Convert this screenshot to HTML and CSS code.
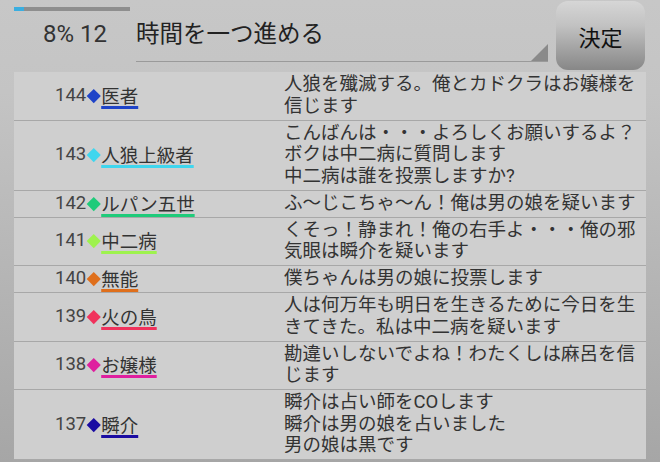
FILE: index.html
```html
<!DOCTYPE html>
<html lang="ja">
<head>
  <meta charset="UTF-8" />
  <title>人狼ログ</title>
  <link rel="stylesheet" href="styles.css">
</head>
<body>
  <header class="topbar">
    <div class="status">
      <div class="progress"><div class="progress-fill"></div></div>
      <div class="status-text">8% 12</div>
    </div>
    <div class="spinner">時間を一つ進める</div>
    <button class="submit">決定</button>
  </header>

  <div class="log">
    <div class="row">
      <div class="who">144<span class="mark c-blue"></span><span class="name c-blue">医者</span></div>
      <div class="msg">人狼を殲滅する。俺とカドクラはお嬢様を<br>信じます</div>
    </div>
    <div class="row">
      <div class="who">143<span class="mark c-cyan"></span><span class="name c-cyan">人狼上級者</span></div>
      <div class="msg">こんばんは・・・よろしくお願いするよ？<br>ボクは中二病に質問します<br>中二病は誰を投票しますか?</div>
    </div>
    <div class="row">
      <div class="who">142<span class="mark c-green"></span><span class="name c-green">ルパン五世</span></div>
      <div class="msg">ふ～じこちゃ～ん！俺は男の娘を疑います</div>
    </div>
    <div class="row">
      <div class="who">141<span class="mark c-lime"></span><span class="name c-lime">中二病</span></div>
      <div class="msg">くそっ！静まれ！俺の右手よ・・・俺の邪<br>気眼は瞬介を疑います</div>
    </div>
    <div class="row">
      <div class="who">140<span class="mark c-orange"></span><span class="name c-orange">無能</span></div>
      <div class="msg">僕ちゃんは男の娘に投票します</div>
    </div>
    <div class="row">
      <div class="who">139<span class="mark c-red"></span><span class="name c-red">火の鳥</span></div>
      <div class="msg">人は何万年も明日を生きるために今日を生<br>きてきた。私は中二病を疑います</div>
    </div>
    <div class="row">
      <div class="who">138<span class="mark c-pink"></span><span class="name c-pink">お嬢様</span></div>
      <div class="msg">勘違いしないでよね！わたくしは麻呂を信<br>じます</div>
    </div>
    <div class="row">
      <div class="who">137<span class="mark c-navy"></span><span class="name c-navy">瞬介</span></div>
      <div class="msg">瞬介は占い師をCOします<br>瞬介は男の娘を占いました<br>男の娘は黒です</div>
    </div>
  </div>
</body>
</html>
```

FILE: styles.css
```css
body {
  margin: 0;
  width: 660px;
  height: 462px;
  overflow: hidden;
  font-family: Roboto, "Noto Sans CJK JP", sans-serif;
  color: #333;
  background: linear-gradient(#c7c7c7, #c4c4c4 20%, #a6a6a6);
}

.topbar {
  display: flex;
  height: 72px;
}

.status {
  width: 122px;
  margin-left: 14px;
}

.progress {
  width: 116px;
  height: 4px;
  margin-top: 7px;
  background-color: #8e8e8e;
}

.progress-fill {
  width: 10px;
  height: 4px;
  background-color: #3aaee0;
}

.status-text {
  margin-top: 9px;
  text-align: center;
  font-size: 24px;
  line-height: 28px;
  color: #333;
}

.spinner {
  position: relative;
  flex: 1;
  height: 59px;
  padding-top: 2px;
  margin-right: 8px;
  display: flex;
  align-items: center;
  font-size: 23.5px;
  color: #222;
  border-bottom: 1.5px solid #9a9a9a;
}

.spinner::after {
  content: "";
  position: absolute;
  right: 0;
  bottom: 0;
  border-left: 17px solid transparent;
  border-bottom: 17px solid #8a8a8a;
}

.submit {
  width: 89px;
  height: 69px;
  margin: 1px 15px 0 0;
  border: none;
  border-radius: 12px;
  background: linear-gradient(#d6d6d6, #c2c2c2 35%, #878787);
  font-family: "Noto Sans CJK JP", sans-serif;
  font-size: 22px;
  color: #111;
  padding: 0;
}

.log {
  margin: 0 14px;
  background-color: #cfcfcf;
}

.row {
  display: grid;
  grid-template-columns: 270px 1fr;
  border-bottom: 1px solid #a8a8a8;
  padding: 2px 0 2.5px;
}

.who {
  display: flex;
  align-items: center;
  padding-left: 41px;
  font-size: 18.5px;
  line-height: 21.5px;
  color: #444;
}

.mark {
  flex-shrink: 0;
  width: 9.5px;
  height: 9.5px;
  margin: 0 3px 0 2.5px;
  transform: rotate(45deg);
  background-color: currentColor;
}

.name {
  font-family: "Noto Sans CJK JP", sans-serif;
  text-decoration: underline 2.5px;
  text-underline-offset: 3px;
}

.msg {
  font-family: Roboto, "Noto Sans CJK JP", sans-serif;
  font-size: 18.5px;
  line-height: 21.5px;
  color: #333;
  white-space: nowrap;
}

.c-blue { color: #1f44c8; }
.c-cyan { color: #3fd6ee; }
.c-green { color: #1fcb7a; }
.c-lime { color: #9ef24e; }
.c-orange { color: #df6f1c; }
.c-red { color: #f0325c; }
.c-pink { color: #df1f9f; }
.c-navy { color: #1a0ca2; }

.name.c-blue { color: #333; text-decoration-color: #1f44c8; }
.name.c-cyan { color: #333; text-decoration-color: #3fd6ee; }
.name.c-green { color: #333; text-decoration-color: #1fcb7a; }
.name.c-lime { color: #333; text-decoration-color: #9ef24e; }
.name.c-orange { color: #333; text-decoration-color: #df6f1c; }
.name.c-red { color: #333; text-decoration-color: #f0325c; }
.name.c-pink { color: #333; text-decoration-color: #df1f9f; }
.name.c-navy { color: #333; text-decoration-color: #1a0ca2; }
```
